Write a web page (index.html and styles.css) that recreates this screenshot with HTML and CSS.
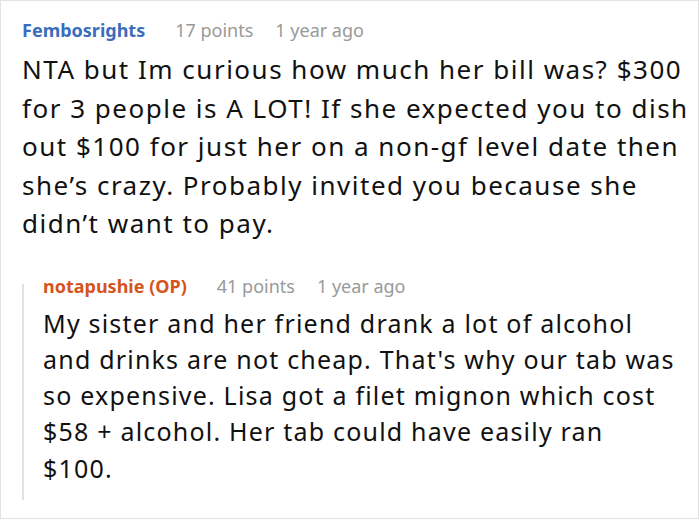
FILE: index.html
```html
<!DOCTYPE html>
<html>
<head>
<meta charset="utf-8">
<link rel="stylesheet" href="styles.css">
</head>
<body>
<div class="frame">
  <div class="comment">
    <div class="meta">
      <span class="user user-blue">Fembosrights</span>
      <span class="points">17 points</span>
      <span class="time">1 year ago</span>
    </div>
    <p class="text">NTA but Im curious how much her bill was? $300 for 3 people is A LOT! If she expected you to dish out $100 for just her on a non-gf level date then she’s crazy. Probably invited you because she didn’t want to pay.</p>
    <div class="reply">
      <div class="meta">
        <span class="user user-orange">notapushie (OP)</span>
        <span class="points">41 points</span>
        <span class="time">1 year ago</span>
      </div>
      <p class="text reply-text">My sister and her friend drank a lot of alcohol<br>and drinks are not cheap. That's why our tab was<br>so expensive. Lisa got a filet mignon which cost<br>$58 + alcohol. Her tab could have easily ran<br>$100.</p>
    </div>
  </div>
</div>
</body>
</html>
```
FILE: styles.css
```css
html, body {
  margin: 0;
  padding: 0;
  background: #fff;
}
.frame {
  width: 699px;
  height: 519px;
  box-sizing: border-box;
  border: 1px solid #e2e2e2;
  font-family: "Noto Sans", "Open Sans", sans-serif;
  color: #111;
  overflow: hidden;
}
.comment {
  padding: 17px 0 0 21px;
}
.meta {
  display: flex;
  align-items: baseline;
  font-size: 18px;
  line-height: 24px;
  white-space: nowrap;
}
.user {
  font-weight: 700;
  margin-right: 30px;
}
.user-blue { color: #3a6dbb; }
.user-orange { color: #d3541d; }
.points {
  color: #999;
  margin-right: 22px;
}
.time { color: #999; }
.text {
  margin: 8px 0 0 0;
  font-size: 26px;
  line-height: 38.5px;
  letter-spacing: 1.5px;
  width: 676px;
}
.reply {
  margin: 31px 0 0 0;
  padding: 0 0 14px 21px;
  background: linear-gradient(#e2e2e2, #e2e2e2) no-repeat 0 10px / 2px calc(100% - 10px);
}
.reply-text {
  margin-top: 7px;
  font-size: 25px;
  line-height: 36.3px;
  letter-spacing: 1.2px;
  width: 660px;
}
```
